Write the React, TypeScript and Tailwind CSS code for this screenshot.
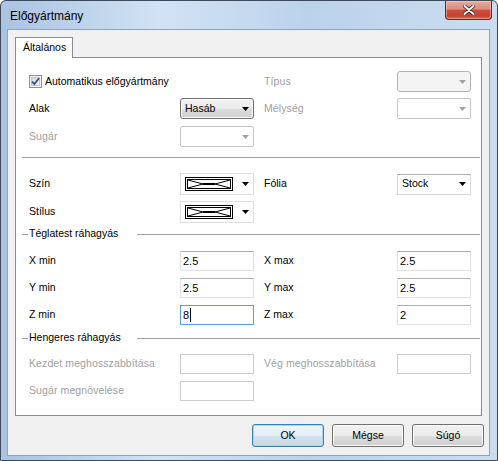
import type { ReactNode } from "react";
import clsx from "clsx";

const font = "font-['Liberation_Sans',Arial,sans-serif]";

function Arrow({ disabled }: { disabled?: boolean }) {
  return (
    <span className="flex w-[16px] shrink-0 items-center justify-center">
      <svg width="7" height="4" viewBox="0 0 7 4">
        <path d="M0 0h7L3.5 4z" fill={disabled ? "#a2a2a2" : "#000"} />
      </svg>
    </span>
  );
}

function Label({ children, disabled }: { children: ReactNode; disabled?: boolean }) {
  return (
    <span
      className={clsx(
        "whitespace-nowrap",
        disabled ? "tracking-[0.1px] text-[#a0a0a0]" : "text-black",
      )}
    >
      {children}
    </span>
  );
}

type ComboKind = "button" | "disabledList" | "disabledEdit" | "edit";

function Combo({ kind, value }: { kind: ComboKind; value?: string }) {
  return (
    <div
      className={clsx(
        "flex h-[21px] w-[74px] items-center border",
        kind === "button" &&
          "rounded-[3px] border-[#707070] bg-[linear-gradient(#f2f2f2_0%,#ebebeb_50%,#dddddd_51%,#cfcfcf_100%)] shadow-[inset_0_0_0_1px_#fbfbfb]",
        kind === "disabledList" && "rounded-[3px] border-[#adb2b5] bg-[#f4f4f4]",
        kind === "disabledEdit" && "rounded-[2px] border-[#c2c5c9] bg-white",
        kind === "edit" && "border-[#d5d8dd] border-t-[#abadb3] bg-white",
      )}
    >
      <span className="flex-1 pl-[4px] text-black">{value}</span>
      <Arrow disabled={kind === "disabledList" || kind === "disabledEdit"} />
    </div>
  );
}

function Swatch() {
  return (
    <div className="flex h-[22px] w-[74px] items-center border border-[#dcdfe3] bg-white">
      <span className="flex flex-1 pl-[4px]">
        <svg width="48" height="14" viewBox="0 0 48 14">
          <rect x="0.5" y="0.5" width="47" height="13" fill="#fff" stroke="#000" />
          <rect x="2.5" y="2.5" width="43" height="9" fill="none" stroke="#000" />
          <path d="M3 3L18 7L3 11" fill="none" stroke="#000" />
          <path d="M45 3L30 7L45 11" fill="none" stroke="#000" />
          <path d="M18 7H30" stroke="#000" strokeWidth="2" />
        </svg>
      </span>
      <Arrow />
    </div>
  );
}

function TextBox({
  value,
  disabled,
  focused,
}: {
  value?: string;
  disabled?: boolean;
  focused?: boolean;
}) {
  return (
    <div
      className={clsx(
        "flex h-[20px] w-[74px] items-center border bg-white pl-[2px] text-[11px] text-black",
        focused
          ? "border-[#569de5]"
          : disabled
            ? "border-[#c9ccd0]"
            : "border-[#dfe2e7] border-t-[#abadb3]",
      )}
    >
      <span>{value}</span>
      {focused && <span className="ml-[1px] h-[14px] w-px bg-black" />}
    </div>
  );
}

function Row({
  className,
  left,
  leftControl,
  right,
  rightControl,
}: {
  className: string;
  left?: ReactNode;
  leftControl?: ReactNode;
  right?: ReactNode;
  rightControl?: ReactNode;
}) {
  return (
    <div className={clsx("flex items-center pl-[13px]", className)}>
      <div className="w-[151px] shrink-0">{left}</div>
      <div className="w-[74px] shrink-0">{leftControl}</div>
      <div className="ml-[10px] w-[133px] shrink-0">{right}</div>
      <div className="w-[74px] shrink-0">{rightControl}</div>
    </div>
  );
}

function GroupHeader({ title, className }: { title: string; className: string }) {
  return (
    <div className={clsx("ml-[6px] mr-[1px] flex h-[14px] items-center", className)}>
      <span className="h-px w-[6px] bg-[#a0a0a0]" />
      <span className="w-[109px] pl-[1px] text-black">{title}</span>
      <span className="h-px flex-1 bg-[#a0a0a0]" />
    </div>
  );
}

function Checkbox() {
  return (
    <svg width="13" height="13" viewBox="0 0 13 13">
      <defs>
        <linearGradient id="cb" x1="0" y1="0" x2="1" y2="1">
          <stop offset="0" stopColor="#cfd2d6" />
          <stop offset="1" stopColor="#f7f7f7" />
        </linearGradient>
      </defs>
      <rect x="0.5" y="0.5" width="12" height="12" fill="#f4f4f4" stroke="#8e8f8f" />
      <rect x="2.5" y="2.5" width="8" height="8" fill="url(#cb)" stroke="#c2c5c9" />
      <path d="M3 6.5L5.3 9L10 3.2" fill="none" stroke="#3a4f7e" strokeWidth="1.8" />
    </svg>
  );
}

function DialogButton({ children, isDefault }: { children: ReactNode; isDefault?: boolean }) {
  return (
    <button
      className={clsx(
        "flex h-[23px] w-[72px] items-center justify-center rounded-[3px] border text-black",
        isDefault
          ? "border-[#3c7fb1] bg-[linear-gradient(#eef5fa_0%,#e3eef6_50%,#d3e3ef_51%,#c6d9e8_100%)] shadow-[inset_0_0_0_1px_#a9d4f0]"
          : "border-[#707070] bg-[linear-gradient(#f2f2f2_0%,#ebebeb_50%,#dddddd_51%,#cfcfcf_100%)] shadow-[inset_0_0_0_1px_#fbfbfb]",
      )}
    >
      {children}
    </button>
  );
}

export default function App() {
  return (
    <div
      className={clsx(
        "flex h-[461px] w-[498px] flex-col overflow-hidden rounded-t-[6px] border border-[#3e4a59] bg-[linear-gradient(90deg,#a9c3e1_0%,#d2e2f4_32%,#bcd2eb_62%,#cadcf0_100%)] text-[10.5px]",
        font,
      )}
    >
      {/* title bar */}
      <div className="flex h-[28px] shrink-0 items-start">
        <span className="flex-1 pl-[9px] pt-[6px] text-[12px] text-black">Előgyártmány</span>
        <div className="mr-[5px] flex h-[19px] w-[47px] items-center justify-center rounded-b-[4px] border border-t-0 border-[#5e2b26] bg-[linear-gradient(#e8aa9d_0%,#d98c7e_45%,#c8503f_52%,#c9412f_80%,#d2644f_100%)] shadow-[inset_0_0_0_1px_rgba(255,220,210,0.45)]">
          <svg width="12" height="10" viewBox="0 0 12 10">
            <path d="M1.5 1L10.5 9M10.5 1L1.5 9" stroke="#4a1510" strokeWidth="3.6" strokeLinecap="round" />
            <path d="M1.5 1L10.5 9M10.5 1L1.5 9" stroke="#fff" strokeWidth="2" strokeLinecap="round" />
          </svg>
        </div>
      </div>

      {/* client area */}
      <div className="ml-[6px] mr-[7px] flex h-[427px] shrink-0 flex-col border border-[#8fa3bd] bg-[#f0f0f0]">
        <div className="px-[7px] pt-[7px]">
          <div className="relative z-10 -mb-px flex h-[21px] w-[58px] items-center border border-b-0 border-[#898c95] bg-white pl-[7px] text-black">
            Általános
          </div>
          <div className="h-[359px] border border-[#898c95] bg-white">
            <Row
              className="mt-[13px] h-[21px]"
              left={
                <span className="flex items-center gap-[3px]">
                  <Checkbox />
                  <Label>Automatikus előgyártmány</Label>
                </span>
              }
              right={<Label disabled>Típus</Label>}
              rightControl={<Combo kind="disabledList" />}
            />
            <Row
              className="mt-[6px] h-[21px]"
              left={<Label>Alak</Label>}
              leftControl={<Combo kind="button" value="Hasáb" />}
              right={<Label disabled>Mélység</Label>}
              rightControl={<Combo kind="disabledEdit" />}
            />
            <Row
              className="mt-[7px] h-[21px]"
              left={<Label disabled>Sugár</Label>}
              leftControl={<Combo kind="disabledEdit" />}
            />
            <div className="ml-[6px] mr-[1px] mt-[10px] h-px bg-[#a0a0a0]" />
            <Row
              className="mt-[15px] h-[22px]"
              left={<Label>Szín</Label>}
              leftControl={<Swatch />}
              right={<Label>Fólia</Label>}
              rightControl={<Combo kind="edit" value="Stock" />}
            />
            <Row
              className="mt-[6px] h-[22px]"
              left={<Label>Stílus</Label>}
              leftControl={<Swatch />}
            />
            <GroupHeader className="mt-[4px]" title="Téglatest ráhagyás" />
            <Row
              className="mt-[10px] h-[20px]"
              left={<Label>X min</Label>}
              leftControl={<TextBox value="2.5" />}
              right={<Label>X max</Label>}
              rightControl={<TextBox value="2.5" />}
            />
            <Row
              className="mt-[7px] h-[20px]"
              left={<Label>Y min</Label>}
              leftControl={<TextBox value="2.5" />}
              right={<Label>Y max</Label>}
              rightControl={<TextBox value="2.5" />}
            />
            <Row
              className="mt-[7px] h-[20px]"
              left={<Label>Z min</Label>}
              leftControl={<TextBox value="8" focused />}
              right={<Label>Z max</Label>}
              rightControl={<TextBox value="2" />}
            />
            <GroupHeader className="mt-[6px]" title="Hengeres ráhagyás" />
            <Row
              className="mt-[9px] h-[20px]"
              left={<Label disabled>Kezdet meghosszabbítása</Label>}
              leftControl={<TextBox disabled />}
              right={<Label disabled>Vég meghosszabbítása</Label>}
              rightControl={<TextBox disabled />}
            />
            <Row
              className="mt-[7px] h-[20px]"
              left={<Label disabled>Sugár megnövelése</Label>}
              leftControl={<TextBox disabled />}
            />
          </div>
        </div>
        <div className="mt-[8px] flex justify-end gap-[8px] pr-[5px]">
          <DialogButton isDefault>OK</DialogButton>
          <DialogButton>Mégse</DialogButton>
          <DialogButton>Súgó</DialogButton>
        </div>
      </div>
    </div>
  );
}
